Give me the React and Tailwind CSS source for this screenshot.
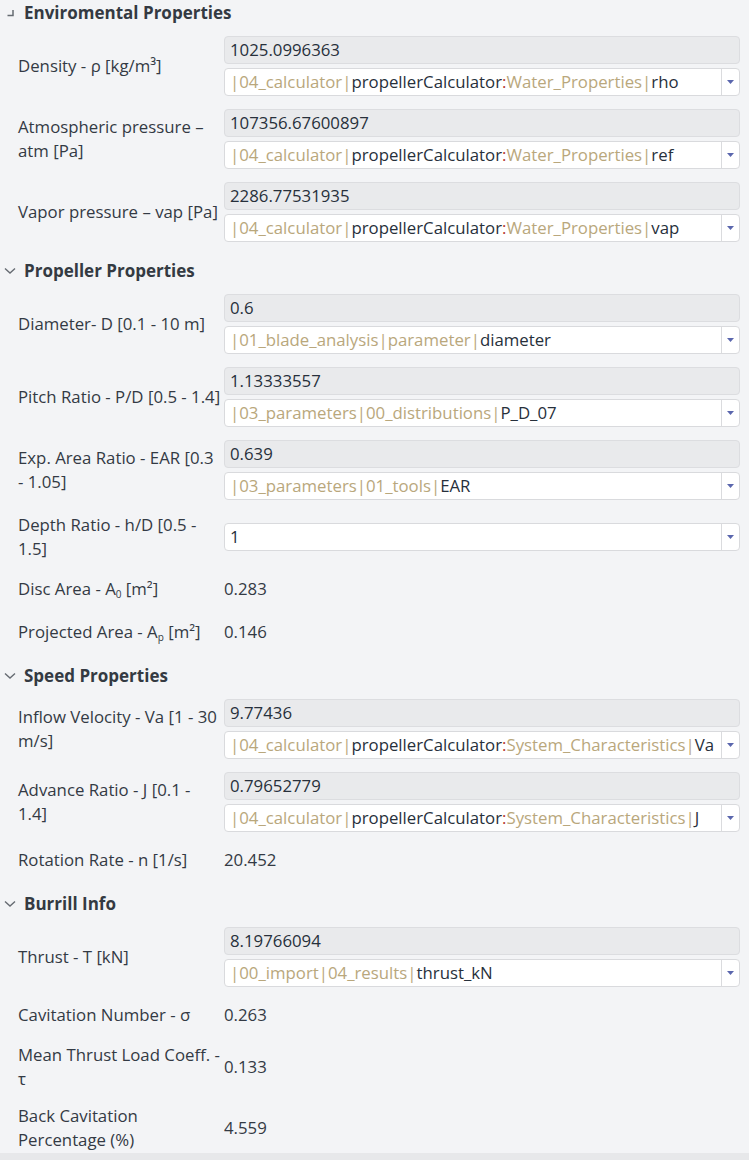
import React from 'react';

const T = 'tan';
const D = 'dark';
const R = 'red';

const sections = [
  {
    title: 'Enviromental Properties',
    icon: 'corner',
    rows: [
      {
        label: ['Density - ρ [kg/m³]'],
        value: '1025.0996363',
        link: [['|04_calculator|', T], ['propellerCalculator', D], [':', R], ['Water_Properties|', T], ['rho', D]],
      },
      {
        label: ['Atmospheric pressure –', 'atm [Pa]'],
        value: '107356.67600897',
        link: [['|04_calculator|', T], ['propellerCalculator', D], [':', R], ['Water_Properties|', T], ['ref', D]],
      },
      {
        label: ['Vapor pressure – vap [Pa]'],
        value: '2286.77531935',
        link: [['|04_calculator|', T], ['propellerCalculator', D], [':', R], ['Water_Properties|', T], ['vap', D]],
      },
    ],
  },
  {
    title: 'Propeller Properties',
    rows: [
      {
        label: ['Diameter- D [0.1 - 10 m]'],
        value: '0.6',
        link: [['|01_blade_analysis|parameter|', T], ['diameter', D]],
      },
      {
        label: ['Pitch Ratio - P/D [0.5 - 1.4]'],
        value: '1.13333557',
        link: [['|03_parameters|00_distributions|', T], ['P_D_07', D]],
      },
      {
        label: ['Exp. Area Ratio - EAR [0.3', '- 1.05]'],
        value: '0.639',
        link: [['|03_parameters|01_tools|', T], ['EAR', D]],
      },
      { label: ['Depth Ratio - h/D [0.5 -', '1.5]'], select: '1' },
      { label: [<>Disc Area - A<sub className="text-[10px]">0</sub> [m²]</>], text: '0.283' },
      { label: [<>Projected Area - A<sub className="text-[10px]">p</sub> [m²]</>], text: '0.146' },
    ],
  },
  {
    title: 'Speed Properties',
    rows: [
      {
        label: ['Inflow Velocity - Va [1 - 30', 'm/s]'],
        value: '9.77436',
        link: [['|04_calculator|', T], ['propellerCalculator', D], [':', R], ['System_Characteristics|', T], ['Va', D]],
      },
      {
        label: ['Advance Ratio - J [0.1 -', '1.4]'],
        value: '0.79652779',
        link: [['|04_calculator|', T], ['propellerCalculator', D], [':', R], ['System_Characteristics|', T], ['J', D]],
      },
      { label: ['Rotation Rate - n [1/s]'], text: '20.452' },
    ],
  },
  {
    title: 'Burrill Info',
    rows: [
      {
        label: ['Thrust - T [kN]'],
        value: '8.19766094',
        link: [['|00_import|04_results|', T], ['thrust_kN', D]],
      },
      { label: ['Cavitation Number - σ'], text: '0.263' },
      { label: ['Mean Thrust Load Coeff. -', 'τ'], text: '0.133' },
      { label: ['Back Cavitation', 'Percentage (%)'], text: '4.559' },
    ],
  },
];

const colors = {
  tan: 'text-[#b9a77c]',
  dark: 'text-[#27303b]',
  red: 'text-[#b5332a]',
};

const Caret = () => (
  <div className="w-[18px] h-full border-l border-[#dadbde] flex items-center justify-center">
    <svg width="7" height="4" viewBox="0 0 7 4">
      <path d="M0 0 H7 L3.5 4 Z" fill="#5a66ad" />
    </svg>
  </div>
);

const SelectBox = ({ children }) => (
  <div className="h-[28px] flex items-stretch bg-white border border-[#d9dadd] rounded-[4px]">
    <div className="flex-1 flex items-center px-[5px] whitespace-nowrap overflow-hidden">{children}</div>
    <Caret />
  </div>
);

const Field = ({ row }) => {
  if (row.text) {
    return <div className="h-[30px] flex items-center text-[#333a44]">{row.text}</div>;
  }
  if (row.select) {
    return (
      <SelectBox>
        <span className={colors.dark}>{row.select}</span>
      </SelectBox>
    );
  }
  return (
    <div className="flex flex-col gap-[4px]">
      <div className="h-[28px] flex items-center px-[5px] bg-[#e9eaec] border border-[#dcdde0] rounded-[4px] text-[#27303b]">
        {row.value}
      </div>
      <SelectBox>
        {row.link.map(([txt, kind], i) => (
          <span key={i} className={colors[kind]}>{txt}</span>
        ))}
      </SelectBox>
    </div>
  );
};

const SectionIcon = ({ type }) =>
  type === 'corner' ? (
    <svg width="12" height="12" viewBox="0 0 12 12" className="shrink-0">
      <path d="M9 3 V8.5 H3.5" fill="none" stroke="#666b72" strokeWidth="1.5" />
    </svg>
  ) : (
    <svg width="12" height="12" viewBox="0 0 12 12" className="shrink-0">
      <path d="M1 3.5 L6 8 L11 3.5" fill="none" stroke="#666b72" strokeWidth="1.4" />
    </svg>
  );

const Section = ({ section, first }) => (
  <div className={first ? '' : 'mt-[16px]'}>
    <div className="h-[26px] flex items-center gap-[8px] pl-[4px] font-bold text-[17px] text-[#343a42]">
      <SectionIcon type={section.icon} />
      <span>{section.title}</span>
    </div>
    <div className="mt-[10px] flex flex-col gap-[13px]">
      {section.rows.map((row, i) => (
        <div key={i} className="flex items-center pl-[18px] pr-[9px]">
          <div className="w-[206px] shrink-0 leading-6 text-[#333a44]">
            {row.label.map((line, j) => (
              <div key={j} className="whitespace-nowrap">{line}</div>
            ))}
          </div>
          <div className="flex-1 min-w-0">
            <Field row={row} />
          </div>
        </div>
      ))}
    </div>
  </div>
);

export default function App() {
  return (
    <div className="w-[749px] h-[1160px] bg-[#f3f4f6] flex flex-col font-['Open_Sans',sans-serif] text-[16.8px] overflow-hidden">
      <div className="flex-1">
        {sections.map((s, i) => (
          <Section key={s.title} section={s} first={i === 0} />
        ))}
      </div>
      <div className="h-[7px] bg-[#e7e8ea]" />
    </div>
  );
}
